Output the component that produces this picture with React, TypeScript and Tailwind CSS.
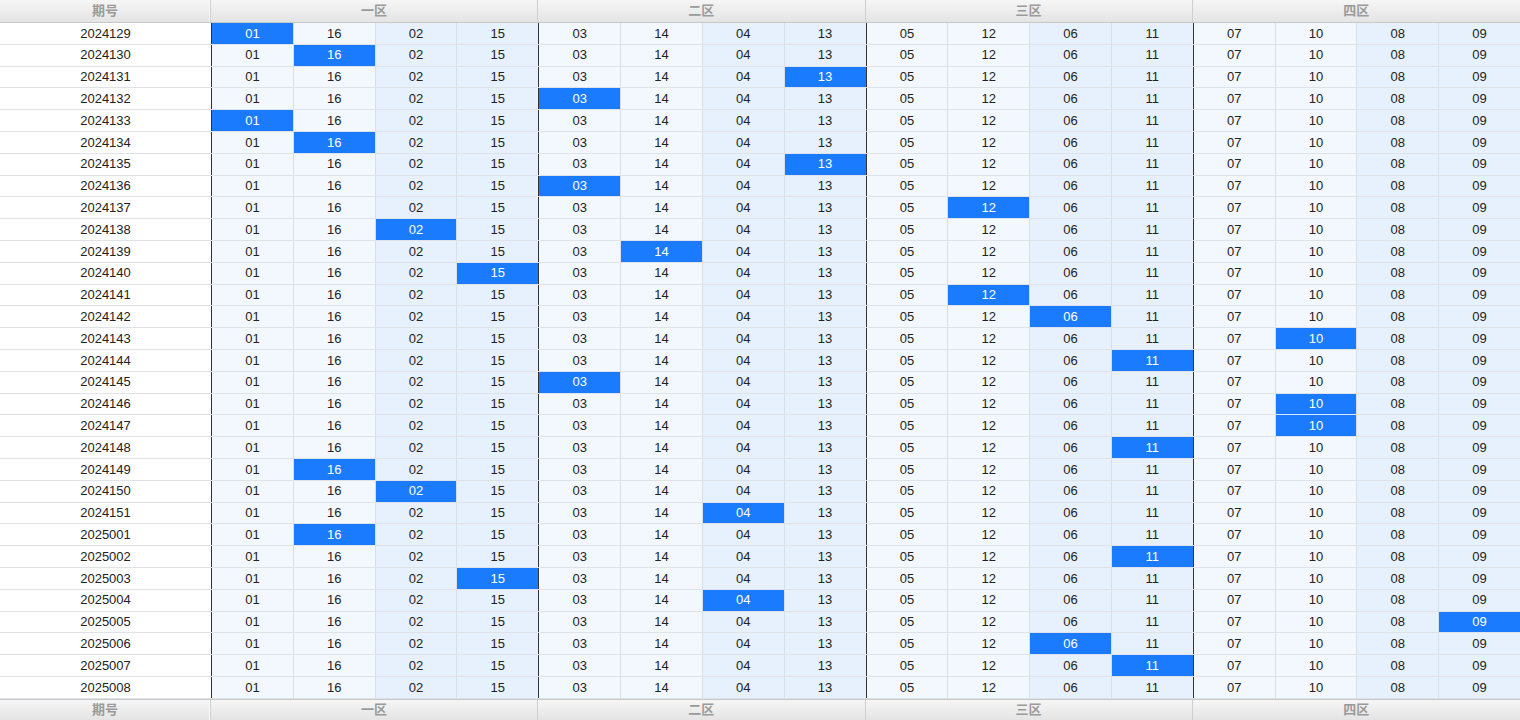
const groups = [
  { label: '一区', nums: ['01', '16', '02', '15'] },
  { label: '二区', nums: ['03', '14', '04', '13'] },
  { label: '三区', nums: ['05', '12', '06', '11'] },
  { label: '四区', nums: ['07', '10', '08', '09'] },
]

const allNums = groups.flatMap((g) => g.nums)

// period -> highlighted column (index into allNums), -1 for none
const rows: [string, number][] = [
  ['2024129', 0],
  ['2024130', 1],
  ['2024131', 7],
  ['2024132', 4],
  ['2024133', 0],
  ['2024134', 1],
  ['2024135', 7],
  ['2024136', 4],
  ['2024137', 9],
  ['2024138', 2],
  ['2024139', 5],
  ['2024140', 3],
  ['2024141', 9],
  ['2024142', 10],
  ['2024143', 13],
  ['2024144', 11],
  ['2024145', 4],
  ['2024146', 13],
  ['2024147', 13],
  ['2024148', 11],
  ['2024149', 1],
  ['2024150', 2],
  ['2024151', 6],
  ['2025001', 1],
  ['2025002', 11],
  ['2025003', 3],
  ['2025004', 6],
  ['2025005', 15],
  ['2025006', 10],
  ['2025007', 11],
  ['2025008', -1],
]

const font = { fontFamily: '"Liberation Sans", Arial, "Noto Sans CJK SC", sans-serif' }

function HeaderRow({ bottom }: { bottom?: boolean }) {
  return (
    <div
      className={`grid grid-cols-[211px_repeat(4,1fr)] bg-gradient-to-b from-[#f6f6f6] to-[#e4e4e4] ${
        bottom ? 'h-[21px] border-t border-[#c8c8c8]' : 'h-[23px] border-b border-[#c8c8c8]'
      }`}
    >
      <div className="flex items-center justify-center text-[13px] font-bold text-[#9a9a9a] border-r border-[#cfcfcf] shadow-[inset_-1px_0_0_#fafafa]">
        期号
      </div>
      {groups.map((g) => (
        <div
          key={g.label}
          className="flex items-center justify-center text-[13px] font-bold text-[#9a9a9a] border-r border-[#cfcfcf] last:border-r-0"
        >
          {g.label}
        </div>
      ))}
    </div>
  )
}

export default function App() {
  return (
    <div className="w-[1520px] h-[720px] overflow-hidden bg-white flex flex-col" style={font}>
      <HeaderRow />
      <div className="flex-1 flex flex-col">
        {rows.map(([period, hit]) => (
          <div
            key={period}
            className="grid grid-cols-[211px_repeat(16,1fr)] h-[21.8px] border-b border-[#dfe3e8]"
          >
            <div className="flex items-center justify-center text-[13px] text-[#222] bg-white">
              {period}
            </div>
            {allNums.map((n, i) => {
              const groupStart = i % 4 === 0
              const deep = i % 4 >= 2
              const isHit = i === hit
              return (
                <div
                  key={i}
                  className={`flex items-center justify-center text-[13px] ${
                    groupStart ? 'border-l border-[#333]' : 'border-l border-[#d6dfea]'
                  } ${
                    isHit
                      ? 'bg-[#1a7bff] text-white'
                      : deep
                        ? 'bg-[#e6f1fd] text-[#222]'
                        : 'bg-[#f3f8fe] text-[#222]'
                  }`}
                >
                  {n}
                </div>
              )
            })}
          </div>
        ))}
      </div>
      <HeaderRow bottom />
    </div>
  )
}
